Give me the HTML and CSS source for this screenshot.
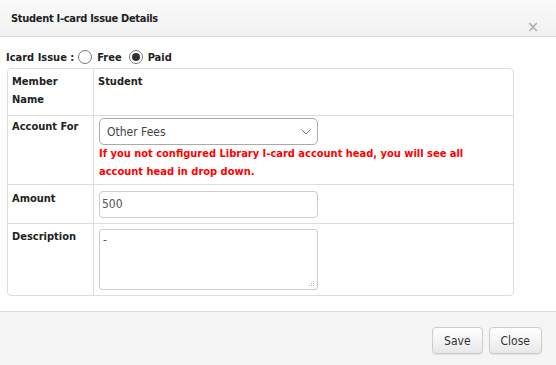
FILE: index.html
```html
<!DOCTYPE html>
<html>
<head>
<meta charset="utf-8">
<link rel="stylesheet" href="styles.css">
</head>
<body>
<div class="modal">
  <div class="modal-header">
    <h4 class="modal-title">Student I-card Issue Details</h4>
    <span class="close">&times;</span>
  </div>
  <div class="modal-body">
    <div class="issue-row">
      <span class="issue-label">Icard Issue :</span>
      <span class="radio"></span><span class="radio-text">Free</span>
      <span class="radio checked"></span><span class="radio-text">Paid</span>
    </div>
    <div class="form-table">
      <div class="cell label row1">Member<br>Name</div>
      <div class="cell value row1 bold">Student</div>
      <div class="cell label row2">Account For</div>
      <div class="cell value row2">
        <div class="select">
          <span>Other Fees</span>
          <svg class="chev" width="10" height="6" viewBox="0 0 10 6"><path d="M0.5 0.5 L5 5 L9.5 0.5" fill="none" stroke="#777" stroke-width="1"/></svg>
        </div>
        <div class="error">If you not configured Library I-card account head, you will see all account head in drop down.</div>
      </div>
      <div class="cell label row3">Amount</div>
      <div class="cell value row3"><div class="input">500</div></div>
      <div class="cell label row4 last">Description</div>
      <div class="cell value row4 last">
        <div class="textarea">-
          <svg class="grip" width="7" height="7" viewBox="0 0 7 7"><g fill="#bbb"><rect x="5" y="1" width="1" height="1"/><rect x="3" y="3" width="1" height="1"/><rect x="5" y="3" width="1" height="1"/><rect x="1" y="5" width="1" height="1"/><rect x="3" y="5" width="1" height="1"/><rect x="5" y="5" width="1" height="1"/></g></svg>
        </div>
      </div>
    </div>
  </div>
  <div class="modal-footer">
    <button class="btn">Save</button>
    <button class="btn">Close</button>
  </div>
</div>
</body>
</html>
```
FILE: styles.css
```css
* { box-sizing: border-box; }
html, body { margin: 0; padding: 0; background: #fff; }
body { font-family: "DejaVu Sans Condensed", "DejaVu Sans", sans-serif; font-stretch: condensed; font-size: 11px; color: #222; }
.modal { width: 556px; height: 365px; display: flex; flex-direction: column; background: #fff; }
.modal-header {
  height: 37px; border-bottom: 1px solid #d9d9d9;
  background: linear-gradient(#fafafa, #f1f1f1);
  display: flex; align-items: flex-start; justify-content: space-between;
  padding: 0 17px 0 11px;
}
.modal-title { margin: 0; font-size: 11px; font-weight: bold; color: #222; line-height: 38px; letter-spacing: -0.3px; }
.close { color: #aaa; font-size: 16px; line-height: 16px; margin-top: 19px; }
.modal-body { flex: 1; padding: 10px 42px 0 6px; }
.issue-row { display: flex; align-items: center; height: 20px; font-weight: bold; }
.issue-label { margin-right: 4px; }
.radio { width: 14px; height: 14px; border: 1px solid #777; border-radius: 50%; display: inline-flex; align-items: center; justify-content: center; margin-right: 5px; background: #fff; }
.radio.checked::after { content: ""; width: 8px; height: 8px; border-radius: 50%; background: #333; }
.radio-text { margin-right: 7px; }
.form-table {
  margin-left: 1px; margin-top: 1px;
  display: grid; grid-template-columns: 86px 1fr;
  border: 1px solid #ddd; border-radius: 4px;
}
.cell { padding: 4px 4px 4px 4px; line-height: 18px; border-bottom: 1px solid #ddd; }
.cell.last { border-bottom: none; }
.label { font-weight: bold; border-right: 1px solid #ddd; }
.value.bold { font-weight: bold; }
.row1 { height: 47px; }
.row2 { height: 69px; padding-top: 2px; }
.value.row2 { padding-left: 5px; }
.row3 { height: 39px; padding-top: 5px; }
.value.row3 { padding-top: 6px; padding-left: 5px; }
.row4 { height: 71px; padding-top: 4px; }
.value.row4 { padding-top: 5px; padding-left: 5px; }
.select {
  width: 219px; height: 27px; border: 1px solid #aaa; border-radius: 5px;
  display: flex; align-items: center; justify-content: space-between;
  padding: 0 6px 0 7px; font-size: 12px; color: #444; background: #fff;
}
.chev { margin-top: 1px; }
.error { color: #f00; font-weight: bold; margin-top: 0; line-height: 18px; }
.input {
  width: 219px; height: 27px; border: 1px solid #ccc; border-radius: 4px;
  padding: 0 2px; font-size: 12px; line-height: 25px; color: #555;
}
.textarea {
  position: relative; width: 219px; height: 61px; border: 1px solid #ccc; border-radius: 3px;
  padding: 2px 3px; font-size: 12px; line-height: 16px; color: #555;
}
.grip { position: absolute; right: 2px; bottom: 2px; }
.modal-footer {
  height: 54px; border-top: 1px solid #ddd; background: #f5f5f5;
  display: flex; justify-content: flex-end; align-items: flex-start; gap: 6px;
  padding: 15px 14px 0 0;
}
.btn {
  font-family: "DejaVu Sans Condensed", "DejaVu Sans", sans-serif; font-stretch: condensed; font-size: 12px; color: #333;
  height: 27px; padding: 0 11px; border: 1px solid #ccc; border-radius: 4px;
  background: linear-gradient(#fff, #e8e8e8); box-shadow: 0 1px 1px rgba(0,0,0,0.08);
}
```
